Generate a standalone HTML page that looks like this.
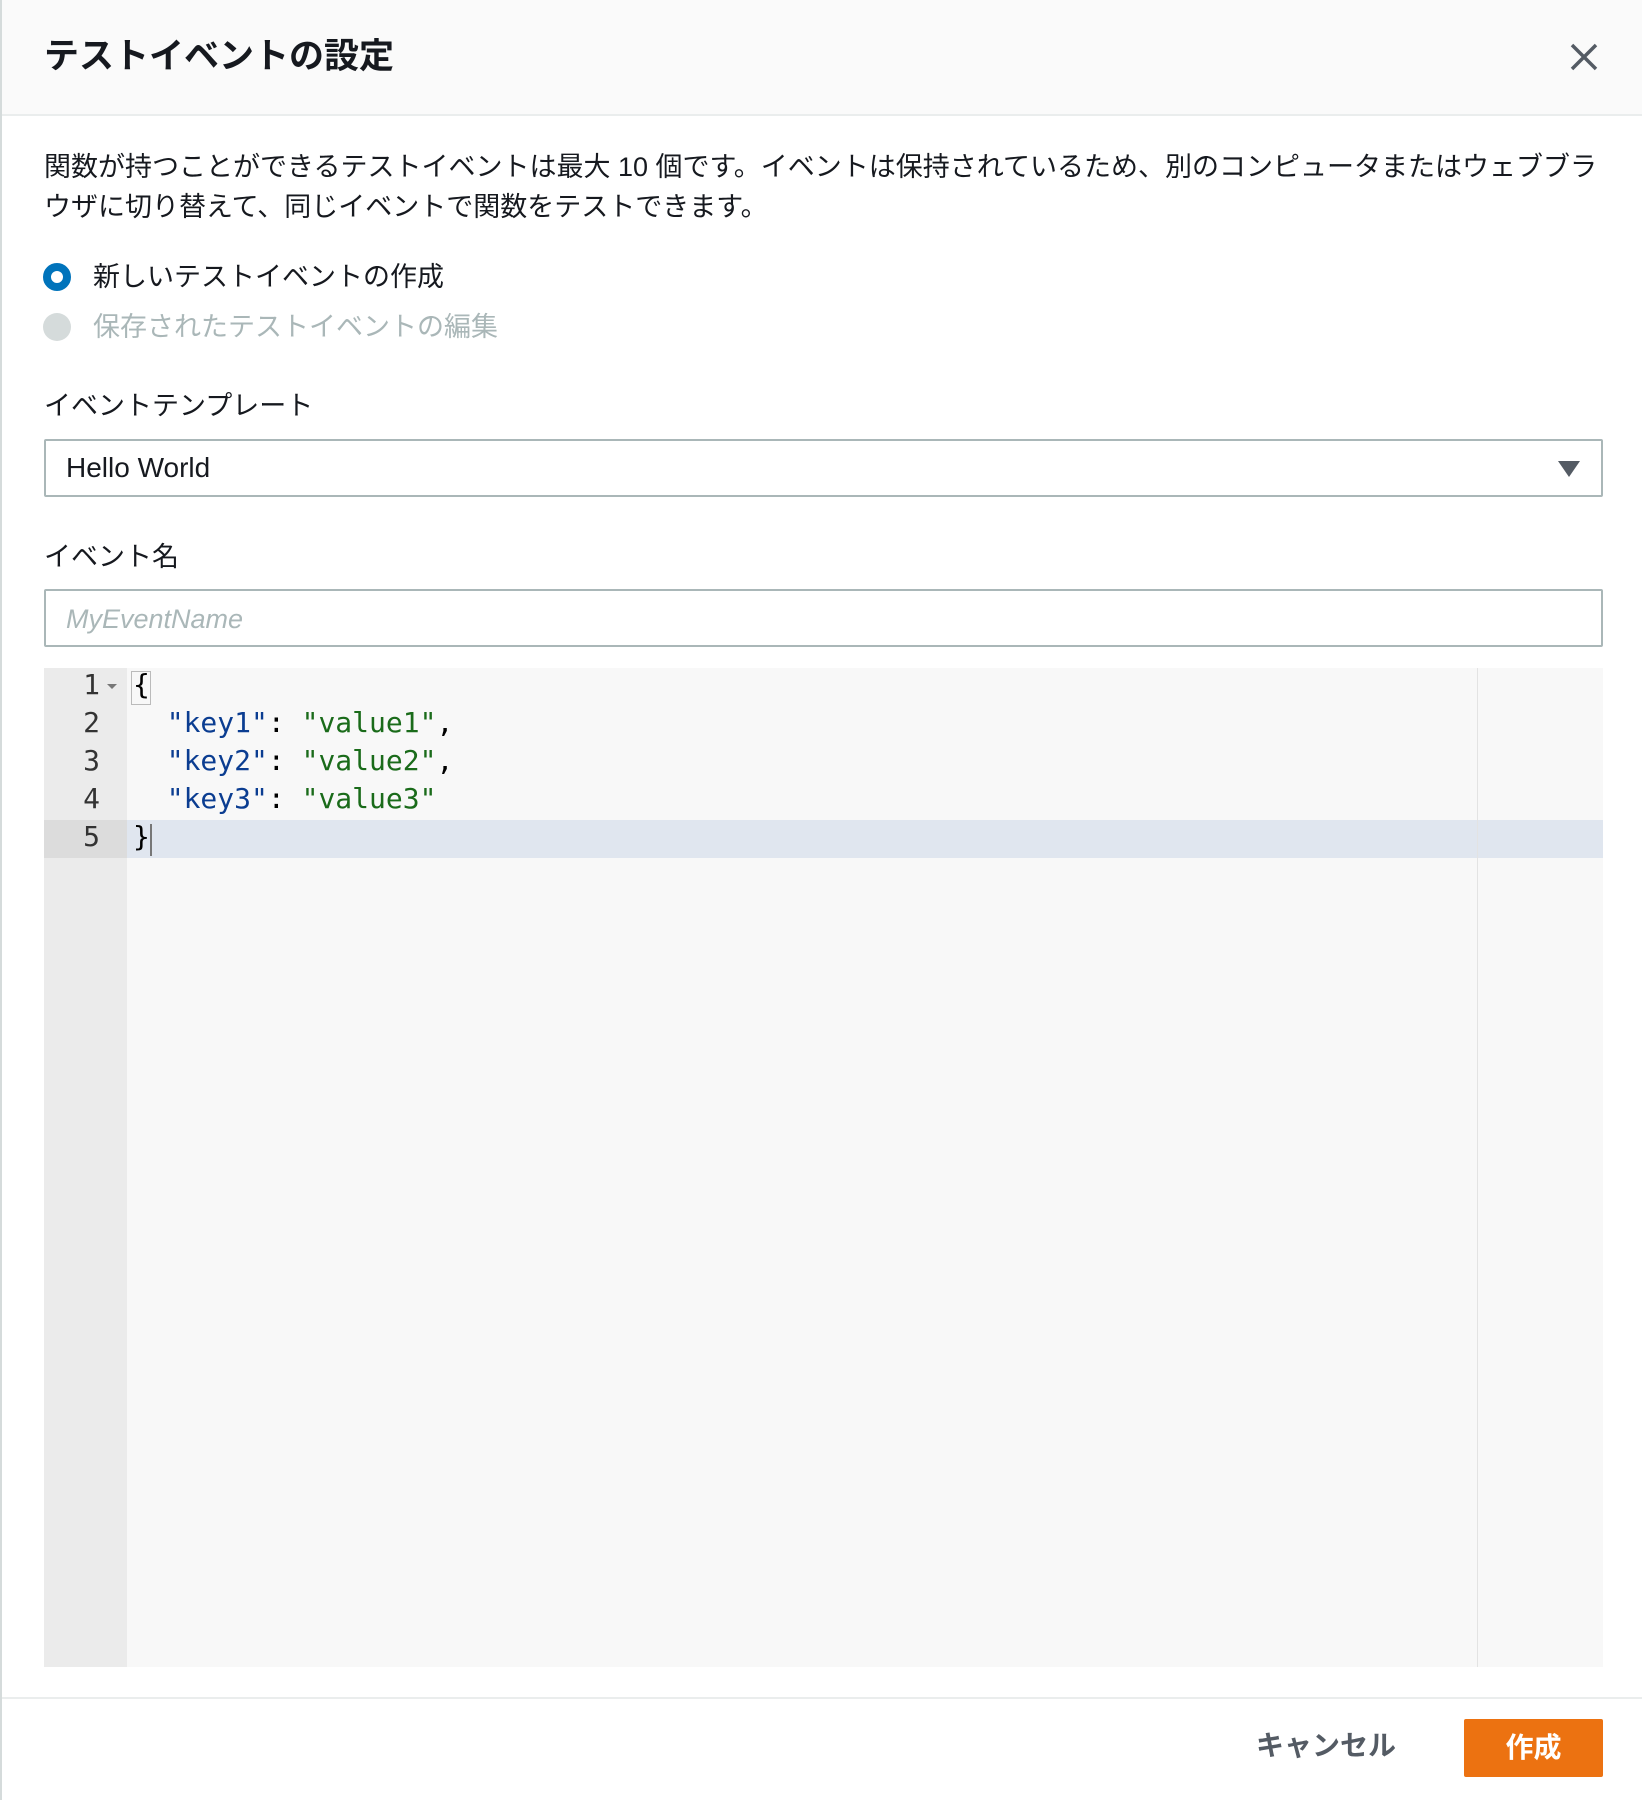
<!DOCTYPE html>
<html><head><meta charset="utf-8"><style>
*{margin:0;padding:0;box-sizing:border-box}
body{width:1642px;height:1800px;background:#fff;font-family:"Liberation Sans","Noto Sans CJK JP",sans-serif;color:#16191f;position:relative;overflow:hidden;border-left:2px solid #d5dbdb}
.abs{position:absolute}
.hdr{left:0;top:0;width:1642px;height:116px;background:#fafafa;border-bottom:2px solid #eaeded}
h1{position:absolute;left:42px;top:35px;font-size:35px;font-weight:bold;line-height:44px}
.p{left:42px;top:147px;font-size:27px;line-height:40px;width:1570px}
.radio{width:28px;height:28px;border-radius:50%}
.lbl{font-size:27px;line-height:34px}
.box{left:42px;width:1559px;border:2px solid #aab7b8;border-radius:2px}
.ed{left:42px;top:668px;width:1559px;height:999px;background:#f8f8f8}
.code{font-family:"DejaVu Sans Mono","Liberation Mono",monospace;font-size:28px;line-height:38px}
</style></head><body>
<div class="abs hdr"><h1>テストイベントの設定</h1>
<svg class="abs" style="left:1568px;top:43px" width="28" height="28" viewBox="0 0 28 28"><path d="M2 2L26 26M26 2L2 26" stroke="#545b64" stroke-width="3.5"/></svg></div>
<div class="abs p">関数が持つことができるテストイベントは最大 10 個です。イベントは保持されているため、別のコンピュータまたはウェブブラウザに切り替えて、同じイベントで関数をテストできます。</div>
<div class="abs radio" style="left:41px;top:263px;border:8px solid #0073bb;background:#fff"></div>
<div class="abs lbl" style="left:91px;top:260px">新しいテストイベントの作成</div>
<div class="abs radio" style="left:41px;top:313px;background:#d5dbdb"></div>
<div class="abs lbl" style="left:91px;top:310px;color:#aab7b8">保存されたテストイベントの編集</div>
<div class="abs lbl" style="left:42px;top:389px">イベントテンプレート</div>
<div class="abs box" style="top:439px;height:58px"><span class="abs" style="left:20px;top:11px;font-size:28px;line-height:32px">Hello World</span>
<svg class="abs" style="left:1512px;top:20px" width="22" height="16"><path d="M0 0H22L11 16Z" fill="#545b64"/></svg></div>
<div class="abs lbl" style="left:42px;top:540px">イベント名</div>
<div class="abs box" style="top:589px;height:58px"><span class="abs" style="left:20px;top:12px;font-size:27px;line-height:32px;font-style:italic;color:#aab7b8">MyEventName</span></div>
<div class="abs ed">
<div class="abs" style="left:0;top:0;width:83px;height:999px;background:#ebebeb"></div>
<div class="abs" style="left:0;top:152px;width:1559px;height:38px;background:#e0e6ef"></div>
<div class="abs" style="left:0;top:152px;width:83px;height:38px;background:#dcdcdc"></div>
<div class="abs" style="left:1433px;top:0;width:1px;height:999px;background:#e3e3e3"></div>
<div class="abs code" style="left:0;top:-2px;width:56px;text-align:right;color:#333">1<br>2<br>3<br>4<br>5</div>
<div class="abs" style="left:63px;top:16px;width:0;height:0;border:5px solid transparent;border-top:5px solid #777"></div>
<div class="abs code" style="left:89px;top:-2px;white-space:pre;color:#000">{
  <span style="color:#0b3d91">"key1"</span>: <span style="color:#1a6b1a">"value1"</span>,
  <span style="color:#0b3d91">"key2"</span>: <span style="color:#1a6b1a">"value2"</span>,
  <span style="color:#0b3d91">"key3"</span>: <span style="color:#1a6b1a">"value3"</span>
}</div>
<div class="abs" style="left:87px;top:3px;width:20px;height:34px;border:1px solid #bbb"></div>
<div class="abs" style="left:106px;top:156px;width:2px;height:32px;background:#777"></div>
</div>
<div class="abs" style="left:0;top:1697px;width:1642px;height:2px;background:#eaeded"></div>
<div class="abs" style="left:1254px;top:1728px;font-size:28px;font-weight:bold;color:#545b64;line-height:36px">キャンセル</div>
<div class="abs" style="left:1462px;top:1719px;width:139px;height:58px;background:#ec7211;border-radius:2px;color:#fff;font-size:28px;font-weight:bold;text-align:center;line-height:58px">作成</div>
</body></html>
